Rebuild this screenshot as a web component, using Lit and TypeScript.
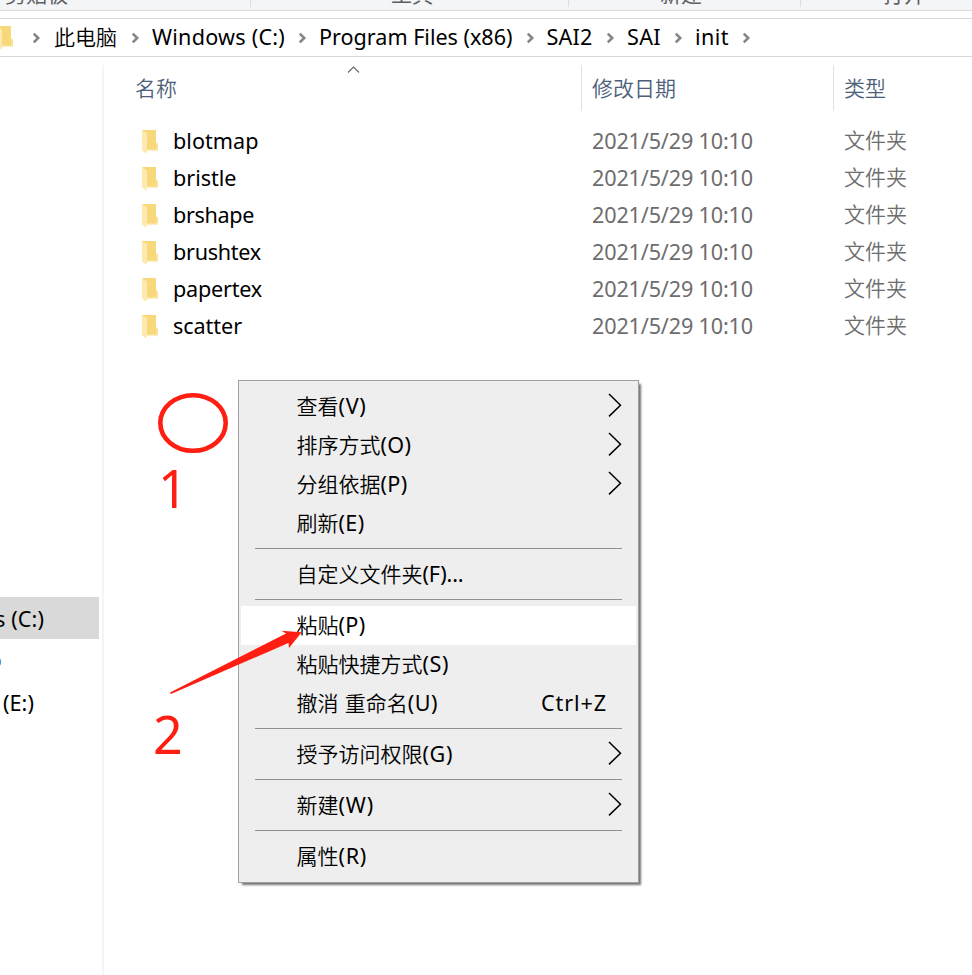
import { LitElement, html, css, svg, nothing } from "lit";
import { customElement, property } from "lit/decorators.js";

/** One run of text, tracked so that it fills a given advance width. */
@customElement("text-run")
class TextRun extends LitElement {
  @property({ type: Number }) w = 0;
  @property() text = "";
  static styles = css`
    :host { display: inline-block; white-space: pre; flex: none; }
  `;
  render() {
    return html`<span>${this.text}</span>`;
  }
  firstUpdated() {
    const span = this.renderRoot.querySelector("span")!;
    if (!this.w) return;
    const natural = span.getBoundingClientRect().width;
    span.style.letterSpacing = `${(this.w - natural) / this.text.length}px`;
    this.style.width = `${this.w}px`;
  }
}

interface MenuEntry {
  zh?: string;
  key?: string;
  keyW?: number;
  sub?: boolean;
  hot?: boolean;
  shortcut?: string;
}

const SEP: MenuEntry = {};
const MENU: MenuEntry[] = [
  { zh: "查看", key: "(V)", keyW: 28, sub: true },
  { zh: "排序方式", key: "(O)", keyW: 31, sub: true },
  { zh: "分组依据", key: "(P)", keyW: 27, sub: true },
  { zh: "刷新", key: "(E)", keyW: 26 },
  SEP,
  { zh: "自定义文件夹", key: "(F)...", keyW: 41 },
  SEP,
  { zh: "粘贴", key: "(P)", keyW: 27, hot: true },
  { zh: "粘贴快捷方式", key: "(S)", keyW: 26.5 },
  { zh: "撤消 重命名", key: "(U)", keyW: 30.5, shortcut: "Ctrl+Z" },
  SEP,
  { zh: "授予访问权限", key: "(G)", keyW: 30.5, sub: true },
  SEP,
  { zh: "新建", key: "(W)", keyW: 35.5, sub: true },
  SEP,
  { zh: "属性", key: "(R)", keyW: 28.5 },
];

const FILES: [string, number][] = [
  ["blotmap", 85.5],
  ["bristle", 63.5],
  ["brshape", 81],
  ["brushtex", 88],
  ["papertex", 89],
  ["scatter", 69],
];

const folder = svg`
  <path d="M2 1h14v12l1.8 2.2v6.3H2z" fill="#f7d97c"/>
  <path d="M16 13l1.8 2v6.5h-1.8z" fill="#fae195"/>
  <path d="M2 1l5 3.5v17l-.5 3.2L2 21.5z" fill="#fee9ae"/>
  <path d="M7 20.6h10.8v1H7z" fill="#fdf0c9"/>`;

const crumbArrow = html`<svg class="crumb-arrow" width="10" height="12" viewBox="0 0 10 12">
  <path d="M1.8 1.6L6.2 6L1.8 10.4" fill="none" stroke="#858585" stroke-width="2.6"/>
</svg>`;

@customElement("app-root")
class AppRoot extends LitElement {
  static styles = css`
    :host {
      display: flex; flex-direction: column; position: relative;
      width: 972px; height: 975px; overflow: hidden; background: #fff; color: #000;
      font: 21.6px/30px "Noto Sans", "Noto Sans CJK SC", sans-serif;
    }
    .zh { font: 350 21px/30px "Noto Sans CJK SC", sans-serif; white-space: pre; }
    .menu .zh { word-spacing: 1.5px; }
    .ribbon {
      flex: none; height: 10px; display: grid; grid-template-columns: 251px 318px 232px 1fr;
      background: #f4f5f7; border-bottom: 1px solid #d9d9d9; overflow: hidden;
    }
    .group { height: 7px; border-right: 1px solid #dcdee0; display: flex; align-items: flex-end; }
    .group:last-child { border: 0; }
    .group span { font: 400 21px/20px "Noto Sans CJK SC", sans-serif; color: #5c5f63; margin-bottom: 4px; }
    .group:first-child span { margin-left: 5px; }
    .address {
      flex: none; height: 37px; margin-top: 7px; display: flex; align-items: center;
      border: solid #d9d9d9; border-width: 1px 0; overflow: hidden;
    }
    .address-icon { margin-left: -5px; margin-right: 18px; flex: none; }
    .crumb { display: flex; align-items: center; flex: none; }
    .crumb-arrow { flex: none; }
    .crumb text-run { margin-bottom: 1px; }
    .crumb .zh { margin-bottom: 3px; }
    .main { flex: 1; display: flex; }
    .side { width: 102px; margin-top: 8px; border-right: 2px solid #f5f5f5; flex: none; overflow: hidden; }
    .drive { height: 42px; width: 99px; display: flex; align-items: center; overflow: hidden; }
    .drive.on { margin-top: 532px; background: #d9d9d9; }
    .drive text-run { margin-top: 1px; }
    .dot { width: 14px; height: 14px; margin: 4px 0 0 -12.7px; border-radius: 7px; background: #2b8fe0; }
    .list { flex: 1; }
    .head { display: grid; grid-template-columns: 478px 252px 1fr; height: 46px; margin-top: 8px; color: #4c607a; position: relative; }
    .head div { border-right: 1px solid #e2e2e2; padding: 7px 0 0 10px; }
    .head div:first-child { padding-left: 31px; }
    .head div:nth-child(3) { border: 0; }
    .sort { position: absolute; left: 243px; top: 0; }
    .rows { padding-top: 12px; }
    .row { display: grid; grid-template-columns: 37px 32px 419px 252px 1fr; height: 37px; align-items: center; color: #6d6d6d; }
    .row .name { color: #000; }
    .row text-run { margin-bottom: 2px; }
    .row .zh { margin-bottom: 5px; }
    .row .ico { display: flex; margin-left: -1px; }
    .menu {
      position: absolute; left: 238px; top: 380px; width: 399px; padding: 6px 0;
      border: 1px solid #a0a0a0; background: #eee; box-shadow: 3px 3px 2px -1px rgba(0,0,0,.55);
    }
    .item { height: 39px; margin: 0 2px; padding-left: 55.5px; display: flex; align-items: center; }
    .item.hot { background: #fff; }
    .label { display: flex; align-items: baseline; flex: 1; margin-bottom: 2px; }
    .sub { margin-right: 13px; margin-bottom: 3px; }
    .shortcut { margin-right: 29px; margin-bottom: 2px; }
    .sep { height: 12px; padding: 5px 16px 0; box-sizing: border-box; }
    .sep::before { content: ""; display: block; height: 1px; background: #919191; }
    .marks { position: absolute; left: 0; top: 0; pointer-events: none; }
    .num { position: absolute; font: 52px/60px "Noto Sans", sans-serif; color: #ff1f12; }
    .one { left: 158px; top: 458px; }
    .two { left: 153px; top: 704px; }
  `;

  crumb(text: string, w: number, gap: number) {
    return html`<div class="crumb">
      <text-run text=${text} .w=${w}></text-run>
      <span style="width:${gap}px"></span>${crumbArrow}<span style="width:11px"></span>
    </div>`;
  }

  entry(e: MenuEntry) {
    if (!e.zh) return html`<div class="sep"></div>`;
    return html`<div class="item ${e.hot ? "hot" : ""}">
      <span class="label"><span class="zh">${e.zh}</span><text-run text=${e.key!} .w=${e.keyW!}></text-run></span>
      ${e.shortcut ? html`<text-run class="shortcut" text=${e.shortcut} .w=${66}></text-run>` : nothing}
      ${e.sub
        ? html`<svg class="sub" width="15" height="26" viewBox="0 0 15 26">
            <path d="M1 2L12.5 13.2L1 24.4" fill="none" stroke="#000" stroke-width="1.5"/>
          </svg>`
        : nothing}
    </div>`;
  }

  render() {
    return html`
      <div class="ribbon">
        <div class="group"><span>剪贴板</span></div>
        <div class="group" style="padding-left:140px"><span>工具</span></div>
        <div class="group" style="padding-left:91px"><span>新建</span></div>
        <div class="group" style="padding-left:82px"><span>打开</span></div>
      </div>
      <div class="address">
        <svg class="address-icon" width="19" height="26" viewBox="0 0 19 26">${folder}</svg>
        ${crumbArrow}
        <div class="crumb"><span style="width:12px"></span><span class="zh">此电脑</span>
          <span style="width:13.5px"></span>${crumbArrow}<span style="width:11.5px"></span></div>
        ${this.crumb("Windows (C:)", 133, 13)}
        ${this.crumb("Program Files (x86)", 193.5, 13)}
        ${this.crumb("SAI2", 46, 13.5)}
        ${this.crumb("SAI", 34, 13)}
        ${this.crumb("init", 34, 13)}
      </div>
      <div class="main">
        <div class="side">
          <div class="drive on"><text-run text="s (C:)" .w=${49} style="margin-left:-5px"></text-run></div>
          <div class="drive"><span class="dot"></span></div>
          <div class="drive"><text-run text="(E:)" .w=${31} style="margin-left:3px"></text-run></div>
        </div>
        <div class="list">
          <div class="head">
            <div><span class="zh">名称</span></div>
            <div><span class="zh">修改日期</span></div>
            <div><span class="zh">类型</span></div>
            <svg class="sort" width="13" height="9" viewBox="0 0 13 9">
              <path d="M1 7.5L6.5 2L12 7.5" fill="none" stroke="#666" stroke-width="1.1"/>
            </svg>
          </div>
          <div class="rows">
            ${FILES.map(
              ([name, w]) => html`<div class="row">
                <span></span>
                <span class="ico"><svg width="19" height="26" viewBox="0 0 19 26">${folder}</svg></span>
                <text-run class="name" text=${name} .w=${w}></text-run>
                <text-run text="2021/5/29 10:10" .w=${161}></text-run>
                <span class="zh">文件夹</span>
              </div>`
            )}
          </div>
        </div>
      </div>
      <div class="menu">${MENU.map((e) => this.entry(e))}</div>
      <svg class="marks" width="400" height="720" viewBox="0 0 400 720">
        <ellipse cx="193" cy="423" rx="32.7" ry="27.8" fill="none" stroke="#ff1f12" stroke-width="4.6"/>
        <path d="M170 692.6L286 633.5L281.5 630.7L301.7 632.3L289 648L288.5 643L171 694Z" fill="#ff1f12"/>
      </svg>
      <span class="num one">1</span>
      <span class="num two">2</span>
    `;
  }
}
